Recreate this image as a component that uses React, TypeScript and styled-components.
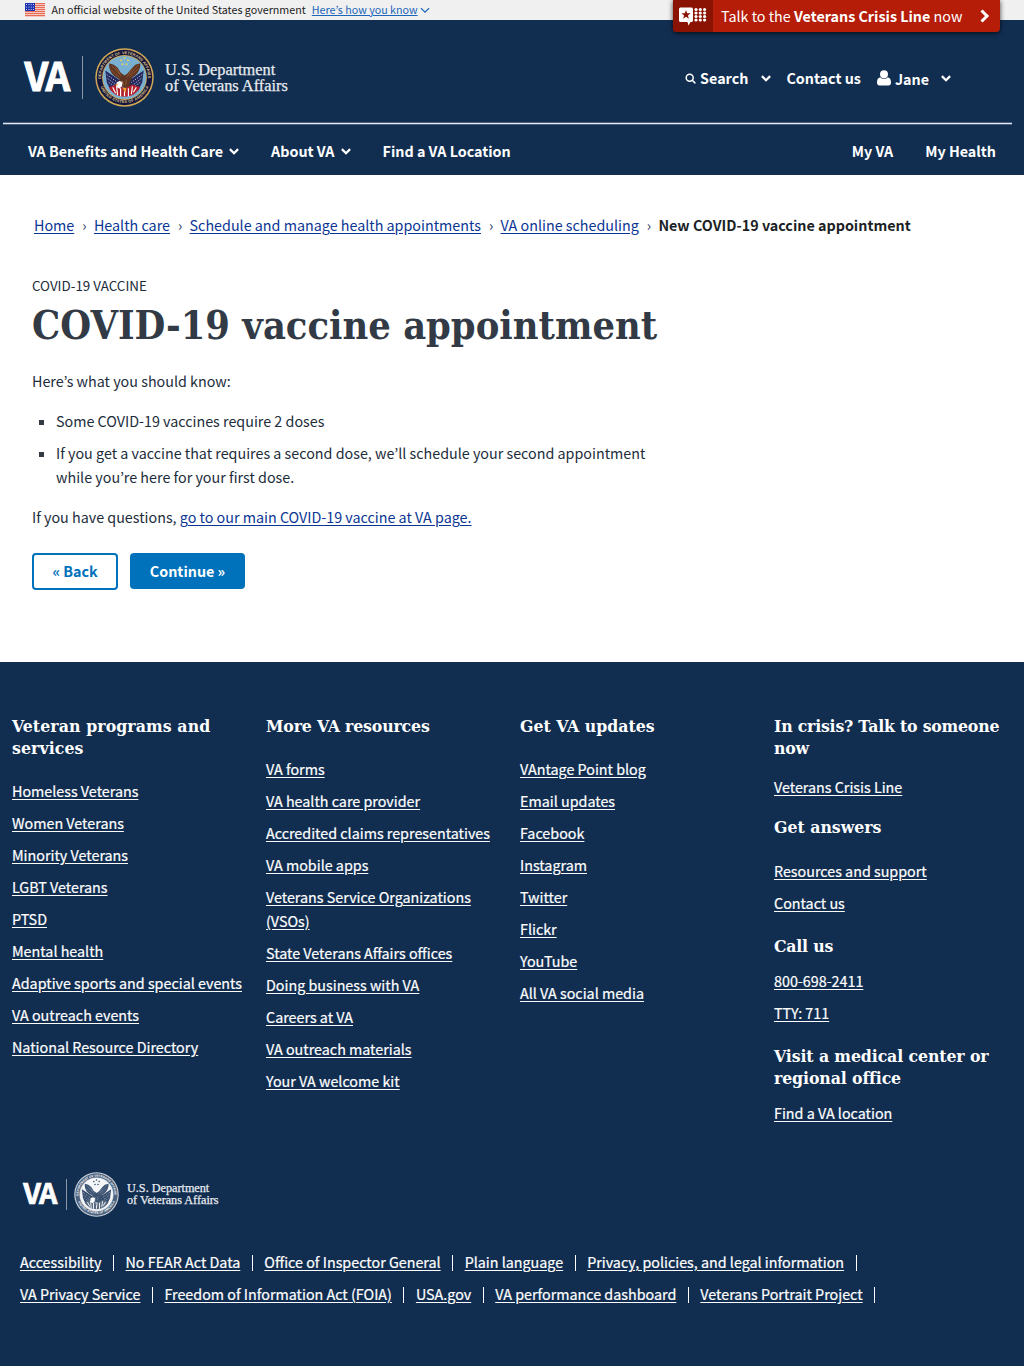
import React from 'react';
import styled, { createGlobalStyle } from 'styled-components';

const sans = '"Noto Sans CJK KR", "Open Sans", sans-serif';
const slab = '"DejaVu Serif Condensed", "DejaVu Serif", serif';
const navy = '#112e51';

const Global = createGlobalStyle`
  * { box-sizing: border-box; }
  body { margin: 0; background: #fff; color: #212c3b; font: 14.32px/24px ${sans}; }
  ul, ol, p, h1, h2 { margin: 0; padding: 0; }
  ul, ol { list-style: none; }
`;

const Page = styled.div`
  width: 1024px;
  min-height: 1366px;
  display: flex;
  flex-direction: column;
`;

/* ---------- government banner ---------- */
const Banner = styled.div`
  position: relative;
  height: 20px;
  background: #f0f0f0;
  padding-left: 25px;
  display: flex;
  align-items: center;
  font-size: 10.72px;
  line-height: 20px;
  color: #1b1b1b;
`;
const BannerText = styled.span`margin-left: 6.500px;`;
const BannerLink = styled.a`
  margin-left: 6px;
  color: #1a66b8;
  text-decoration: underline;
  display: flex;
  align-items: center;
  gap: 2px;
`;
const Crisis = styled.a`
  position: absolute;
  left: 673px;
  top: 0;
  width: 327px;
  height: 32px;
  display: flex;
  align-items: center;
  background: #b51d09;
  color: #fff;
  border-radius: 0 0 4px 4px;
  box-shadow: 0 1px 5px rgba(0, 0, 0, 0.75);
  font-size: 14.32px;
`;
const CrisisMark = styled.span`
  width: 40px;
  height: 32px;
  background: #8b1303;
  border-radius: 0 0 0 4px;
  display: flex;
  align-items: center;
  justify-content: center;
`;
const CrisisText = styled.span`flex: 1; padding-left: 8px; white-space: nowrap; line-height: 32px;`;
const CrisisArrow = styled.span`width: 30px; display: flex; justify-content: center;`;

/* ---------- header ---------- */
const Header = styled.header`
  height: 155px;
  background: ${navy};
  color: #fff;
  font-weight: 700;
`;
const HeaderTop = styled.div`
  height: 102px;
  padding: 0 73px 0 24px;
  display: flex;
  align-items: center;
  justify-content: space-between;
`;
const Brand = styled.div`display: flex; align-items: center; padding-top: 13px;`;
const Utility = styled.div`display: flex; align-items: flex-start; padding-top: 15px;`;
const UtilityItem = styled.a<{ $gap?: number; $drop?: number }>`
  display: flex;
  align-items: center;
  margin: ${p => p.$drop ?? 0}px 0 0 ${p => p.$gap ?? 0}px;
  white-space: nowrap;
`;
const Space = styled.span<{ $w: number }>`width: ${p => p.$w}px;`;
const Rule = styled.div`
  height: 3px;
  margin: 0 12px 0 3px;
  background: #e6e9f0;
  border: solid #4d6180;
  border-width: 1px 0;
`;
const Nav = styled.nav`
  height: 50px;
  padding: 1px 28px 0;
  display: flex;
  align-items: center;
`;
const NavItem = styled.a<{ $gap?: number; $push?: boolean }>`
  display: flex;
  align-items: center;
  gap: 6px;
  margin-left: ${p => (p.$push ? 'auto' : `${p.$gap ?? 0}px`)};
  white-space: nowrap;
`;

/* ---------- main ---------- */
const Main = styled.main`height: 487px; padding: 38px 32px 0;`;
const Crumbs = styled.ol`display: flex; padding-left: 2px;`;
const Crumb = styled.li`
  white-space: nowrap;
  &:not(:last-child)::after { content: '›'; margin: 0 7.300px 0 8px; color: #2b3f66; }
  &:last-child { font-weight: 700; color: #1b1f26; }
`;
const Link = styled.a`color: #0a3594; text-decoration: underline; text-underline-offset: 2px;`;
const Eyebrow = styled.div`margin-top: 36px; font-size: 13.400px;`;
const Title = styled.h1`
  margin-top: 7px;
  font: 700 39.400px/42px ${slab};
  color: #323a45;
  white-space: nowrap;
`;
const Para = styled.p<{ $top: number }>`margin-top: ${p => p.$top}px;`;
const Bullets = styled.ul`margin-top: 16px; display: flex; flex-direction: column; gap: 8px; width: 640px;`;
const Bullet = styled.li`
  display: grid;
  grid-template-columns: 24px 1fr;
  &::before { content: ''; width: 5px; height: 5px; margin: 11px 0 0 7px; background: #323a45; }
`;
const Buttons = styled.div`margin-top: 24px; display: flex; gap: 12px;`;
const Button = styled.button<{ $primary?: boolean }>`
  width: ${p => (p.$primary ? 115 : 86)}px;
  height: ${p => (p.$primary ? 36 : 37)}px;
  padding: 0 0 1px;
  border: ${p => (p.$primary ? '0' : '2px solid #0071bb')};
  border-radius: 4px;
  background: ${p => (p.$primary ? '#0071bb' : '#fff')};
  color: ${p => (p.$primary ? '#fff' : '#0071bb')};
  font: 700 14.32px/24px ${sans};
`;

/* ---------- footer ---------- */
const Footer = styled.footer`
  flex: 1;
  background: ${navy};
  color: #fff;
  padding-top: 53px;
`;
const Columns = styled.div`
  height: 456px;
  padding-left: 12px;
  display: grid;
  grid-template-columns: repeat(4, 254px);
`;
const Column = styled.section`padding-right: 16px;`;
const Heading = styled.h2<{ $top?: number; $track?: number }>`
  margin-top: ${p => p.$top ?? 0}px;
  font: 700 17.500px/22px ${slab};
  letter-spacing: ${p => p.$track ?? 0}px;
  white-space: pre-line;
`;
const Links = styled.ul<{ $top: number }>`
  margin-top: ${p => p.$top}px;
  display: flex;
  flex-direction: column;
  gap: 8px;
`;
const FooterLink = styled.a`
  color: #fff;
  text-decoration: underline;
  text-underline-offset: 2px;
  -webkit-text-stroke: 0.2px #fff;
`;
const FooterBrand = styled.div`height: 46px; padding-left: 23px; display: flex; align-items: center;`;
const LegalRow = styled.ul<{ $top: number }>`
  margin-top: ${p => p.$top}px;
  padding-left: 20px;
  display: flex;
  align-items: center;
`;
const LegalItem = styled.li`
  display: flex;
  align-items: center;
  white-space: nowrap;
  &::after { content: ''; width: 1px; height: 16px; margin: 2px 11.500px 0 11.500px; background: #fff; }
`;

/* ---------- drawings ---------- */
const ChevronSvg = styled.svg<{ $drop: number }>`margin-top: ${p => p.$drop}px;`;
const Chevron = ({ w = 10, stroke = 2.2, drop = 0 }: { w?: number; stroke?: number; drop?: number }) => (
  <ChevronSvg $drop={drop} width={w} height={w * 0.7} viewBox="0 0 10 7" fill="none" stroke="currentColor" strokeWidth={stroke}>
    <path d="M.9 1.100 5 5.200 9.100 1.100" />
  </ChevronSvg>
);

const Flag = () => (
  <svg width="20" height="14" viewBox="0 0 20 14">
    <rect width="20" height="14" fill="#fff" />
    {[0, 2, 4, 6, 8, 10, 12].map(y => <rect key={y} y={y + 0.2} width="20" height="1.1" fill="#e0492c" />)}
    <rect width="10" height="8" fill="#1e33b1" />
    {[1.5, 4, 6.5].map(y => [1.5, 4, 6.2, 8.5].map(x => <circle key={`${x}-${y}`} cx={x} cy={y} r=".5" fill="#fff" />))}
  </svg>
);

const CrisisIcon = () => (
  <svg width="30" height="20" viewBox="0 0 30 20" fill="#fff">
    <path d="M2.500 1.500h11A1.500 1.500 0 0 1 15 3v11.500a1.500 1.500 0 0 1-1.500 1.500h-1L10.500 19.500 9.500 16h-7A1.500 1.500 0 0 1 1 14.500V3a1.500 1.500 0 0 1 1.500-1.500z" />
    <path fill="#8b1303" d="m8 4 1.200 3.200 3.400.1-2.700 2.100 1 3.300L8 10.800l-2.900 1.900 1-3.300-2.700-2.100 3.400-.1z" />
    {[3.5, 7, 10.5, 14].map(y => [18, 22.3, 26.6].map(x => <circle key={`${x}-${y}`} cx={x} cy={y} r="1.600" />))}
  </svg>
);

const SearchIcon = () => (
  <svg width="11" height="11" viewBox="0 0 11 11" fill="none" stroke="currentColor" strokeWidth="1.500">
    <circle cx="4.700" cy="4.700" r="3.500" />
    <path d="m7.300 7.300 2.600 2.600" strokeLinecap="round" />
  </svg>
);

const UserSvg = styled.svg`margin-top: -2px;`;
const UserIcon = () => (
  <UserSvg width="14" height="16" viewBox="0 0 14 16" fill="currentColor">
    <circle cx="7" cy="4.200" r="4" />
    <path d="M3.300 7.300C.8 7.800 0 10 0 12.600 0 14.500 1 15.500 2.600 15.500h8.800c1.600 0 2.600-1 2.600-2.900 0-2.600-.8-4.800-3.300-5.300C9.500 9.300 4.500 9.300 3.300 7.300z" />
  </UserSvg>
);

const Seal = ({ size, mono }: { size: number; mono?: boolean }) => {
  const id = mono ? 'm' : 'c';
  const gold = mono ? '#c9d1da' : '#d1a954';
  const ring = mono ? '#4b617d' : '#14163f';
  const sky = mono ? '#f3f5f7' : '#79b0d2';
  const brown = mono ? '#3a5170' : '#5f3420';
  const feather = mono ? '#7f90a6' : '#9c6237';
  const flag = mono ? '#31496a' : '#23295f';
  const red = mono ? '#56697f' : '#b3202c';
  return (
    <svg width={size} height={size} viewBox="0 0 60 60">
      <circle cx="30" cy="30" r="29.700" fill={gold} />
      <circle cx="30" cy="30" r="28.200" fill={ring} />
      <circle cx="30" cy="30" r="22.800" fill={gold} />
      <circle cx="30" cy="30" r="21.900" fill={sky} />
      <path id={`top-${id}`} d="M6.500 34.500A23.900 23.900 0 1 1 53.500 34.500" fill="none" />
      <path id={`bot-${id}`} d="M4.400 36.500A26.600 26.600 0 0 0 55.600 36.500" fill="none" />
      <g fontFamily="Liberation Sans, sans-serif" fontWeight="700" fontSize="4" fill={mono ? '#fff' : '#d9bf7c'}>
        <text><textPath href={`#top-${id}`} startOffset="3" textLength="77">DEPARTMENT OF VETERANS AFFAIRS</textPath></text>
        <text><textPath href={`#bot-${id}`} startOffset="3.500" textLength="62">UNITED STATES OF AMERICA</textPath></text>
      </g>
      {/* flags either side */}
      <path fill={flag} d="M10.500 23 27 34l-4 12-7-3-4-8zM49.500 23 33 34l4 12 7-3 4-8z" />
      <path stroke="#fff" strokeWidth=".9" fill="none" strokeDasharray="1 1.600" d="M12 27l11 8M13 31l9 7M14 35l7 5M48 27l-11 8M47 31l-9 7M46 35l-7 5" />
      <path fill={red} d="M14 40c4 7 9 9.500 16 9.500S42 47 46 40l-8-3-8 4-8-4z" />
      <path stroke="#fff" strokeWidth="1.200" fill="none" d="M18 40l3 6M22 39l1 9M26 41v8M34 41v8M38 39l-1 8M42 40l-3 5M30 44v5" />
      {/* raised wings, body and talons */}
      <path fill={brown} d="M14.500 15.500c-.8 6 2 11.500 7.500 14.500l3 2-2 3 4 4 4 2 4-2 1-5 2-4c5-3 8.500-8 8-14.500l-5 1.500-4 4-4 5-3 2-4-3-3-5-4-3z" />
      <path stroke={feather} strokeWidth=".7" fill="none" d="M17 18l8 9M16 22l9 8M21 20l6 9M44 17l-9 11M44 21l-9 9M38 21l-6 9M28 33l1 5M32 32l-1 6" />
      <path fill="#fff" d="m22 35 3-1.500 3 1-.5 4-2.500 3-3.500-2z" />
      <path fill={mono ? '#aeb9c6' : '#e3a52c'} d="m20.500 37 2.500-1v2.500zM28 41l4-.5-1 5z" />
      {[[30, 10.5], [26.5, 12.5], [33.5, 12.5], [28, 16.5], [32, 16.5]].map(([x, y]) => (
        <circle key={`${x}-${y}`} cx={x} cy={y} r="1" fill={mono ? '#31496a' : '#ecd35c'} />
      ))}
    </svg>
  );
};

const Wordmark = styled.span<{ $w: number; $h: number }>`
  display: flex;
  svg { width: ${p => p.$w}px; height: ${p => p.$h}px; overflow: visible; }
`;
const Divider = styled.span<{ $h: number; $l: number; $r: number }>`
  width: 1px;
  height: ${p => p.$h}px;
  margin: 0 ${p => p.$r}px 0 ${p => p.$l}px;
  background: #8996a8;
`;
const Agency = styled.span<{ $size: number; $lh: number; $ml: number }>`
  margin-left: ${p => p.$ml}px;
  font: 400 ${p => p.$size}px/${p => p.$lh}px "Liberation Serif", serif;
  color: #e8ebef;
  -webkit-text-stroke: 0.25px #e8ebef;
  white-space: nowrap;
`;

const VaText = ({ w, h }: { w: number; h: number }) => (
  <Wordmark $w={w} $h={h}>
    <svg viewBox="0 0 47 29">
      <text x=".4" y="28" fontFamily={sans} fontWeight="700" fontSize="38.500" fill="#fff" stroke="#fff" strokeWidth="1" textLength="45.800" lengthAdjust="spacing">VA</text>
    </svg>
  </Wordmark>
);

const programs = ['Homeless Veterans', 'Women Veterans', 'Minority Veterans', 'LGBT Veterans', 'PTSD', 'Mental health', 'Adaptive sports and special events', 'VA outreach events', 'National Resource Directory'];
const resources = ['VA forms', 'VA health care provider', 'Accredited claims representatives', 'VA mobile apps', 'Veterans Service Organizations (VSOs)', 'State Veterans Affairs offices', 'Doing business with VA', 'Careers at VA', 'VA outreach materials', 'Your VA welcome kit'];
const updates = ['VAntage Point blog', 'Email updates', 'Facebook', 'Instagram', 'Twitter', 'Flickr', 'YouTube', 'All VA social media'];
const legalOne = ['Accessibility', 'No FEAR Act Data', 'Office of Inspector General', 'Plain language', 'Privacy, policies, and legal information'];
const legalTwo = ['VA Privacy Service', 'Freedom of Information Act (FOIA)', 'USA.gov', 'VA performance dashboard', 'Veterans Portrait Project'];
const crumbs = ['Home', 'Health care', 'Schedule and manage health appointments', 'VA online scheduling'];

const LinkList = ({ items, top }: { items: string[]; top: number }) => (
  <Links $top={top}>{items.map(t => <li key={t}><FooterLink>{t}</FooterLink></li>)}</Links>
);
const Legal = ({ items, top }: { items: string[]; top: number }) => (
  <LegalRow $top={top}>{items.map(t => <LegalItem key={t}><FooterLink>{t}</FooterLink></LegalItem>)}</LegalRow>
);

export default function App() {
  return (
    <Page>
      <Global />
      <Banner>
        <Flag />
        <BannerText>An official website of the United States government</BannerText>
        <BannerLink>Here’s how you know <Chevron w={10} stroke={1.3} /></BannerLink>
        <Crisis>
          <CrisisMark><CrisisIcon /></CrisisMark>
          <CrisisText>Talk to the <b>Veterans Crisis Line</b> now</CrisisText>
          <CrisisArrow>
            <svg width="10" height="14" viewBox="0 0 10 14" fill="none" stroke="#fff" strokeWidth="3"><path d="m1.500 1.500 5.500 5.500-5.500 5.500" /></svg>
          </CrisisArrow>
        </Crisis>
      </Banner>
      <Header>
        <HeaderTop>
          <Brand>
            <VaText w={47} h={29} />
            <Divider $h={43} $l={11} $r={12} />
            <Seal size={59} />
            <Agency $size={16.35} $lh={16} $ml={11}>U.S. Department<br />of Veterans Affairs</Agency>
          </Brand>
          <Utility>
            <UtilityItem><SearchIcon /><Space $w={4} />Search<Space $w={13} /><Chevron /></UtilityItem>
            <UtilityItem $gap={15}>Contact us</UtilityItem>
            <UtilityItem $gap={16} $drop={1}><UserIcon /><Space $w={4} />Jane<Space $w={12} /><Chevron drop={-2} /></UtilityItem>
          </Utility>
        </HeaderTop>
        <Rule />
        <Nav>
          <NavItem>VA Benefits and Health Care<Chevron drop={1} /></NavItem>
          <NavItem $gap={32}>About VA<Chevron drop={1} /></NavItem>
          <NavItem $gap={32}>Find a VA Location</NavItem>
          <NavItem $push>My VA</NavItem>
          <NavItem $gap={32}>My Health</NavItem>
        </Nav>
      </Header>
      <Main>
        <Crumbs>
          {crumbs.map(c => <Crumb key={c}><Link>{c}</Link></Crumb>)}
          <Crumb>New COVID-19 vaccine appointment</Crumb>
        </Crumbs>
        <Eyebrow>COVID-19 VACCINE</Eyebrow>
        <Title>COVID-19 vaccine appointment</Title>
        <Para $top={23}>Here’s what you should know:</Para>
        <Bullets>
          <Bullet>Some COVID-19 vaccines require 2 doses</Bullet>
          <Bullet>If you get a vaccine that requires a second dose, we’ll schedule your second appointment while you’re here for your first dose.</Bullet>
        </Bullets>
        <Para $top={16}>If you have questions, <Link>go to our main COVID-19 vaccine at VA page.</Link></Para>
        <Buttons>
          <Button>« Back</Button>
          <Button $primary>Continue »</Button>
        </Buttons>
      </Main>
      <Footer>
        <Columns>
          <Column>
            <Heading $track={0.1}>Veteran programs and services</Heading>
            <LinkList items={programs} top={20} />
          </Column>
          <Column>
            <Heading $track={-0.15}>More VA resources</Heading>
            <LinkList items={resources} top={20} />
          </Column>
          <Column>
            <Heading>Get VA updates</Heading>
            <LinkList items={updates} top={20} />
          </Column>
          <Column>
            <Heading $track={-0.2}>{'In crisis? Talk to someone\nnow'}</Heading>
            <LinkList items={['Veterans Crisis Line']} top={16} />
            <Heading $top={17}>Get answers</Heading>
            <LinkList items={['Resources and support', 'Contact us']} top={21} />
            <Heading $top={20} $track={-0.2}>Call us</Heading>
            <LinkList items={['800-698-2411', 'TTY: 711']} top={12} />
            <Heading $top={20} $track={-0.1}>{'Visit a medical center or\nregional office'}</Heading>
            <LinkList items={['Find a VA location']} top={12} />
          </Column>
        </Columns>
        <FooterBrand>
          <VaText w={35} h={21.6} />
          <Divider $h={31} $l={8} $r={7} />
          <Seal size={45} mono />
          <Agency $size={12.2} $lh={12} $ml={8}>U.S. Department<br />of Veterans Affairs</Agency>
        </FooterBrand>
        <Legal items={legalOne} top={33} />
        <Legal items={legalTwo} top={8} />
      </Footer>
    </Page>
  );
}
